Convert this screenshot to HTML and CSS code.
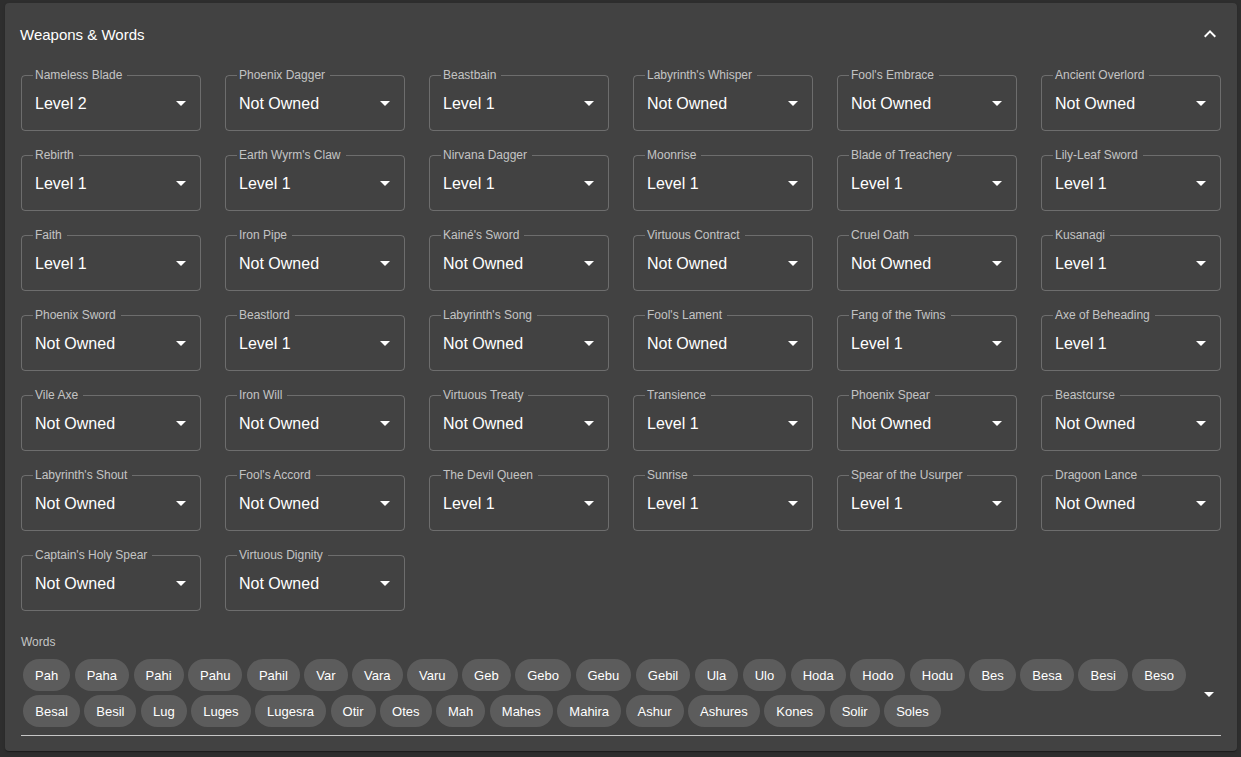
FILE: index.html
```html
<!DOCTYPE html>
<html lang="en">
<head>
<meta charset="utf-8">
<title>Weapons &amp; Words</title>
<link rel="stylesheet" href="styles.css">
</head>
<body>
<section class="card">
  <header class="card-header">
    <h2 class="card-title">Weapons &amp; Words</h2>
    <button class="collapse-btn" aria-label="collapse">
      <svg viewBox="0 0 24 24" width="24" height="24"><path d="M12 8l-6 6 1.41 1.41L12 10.83l4.59 4.58L18 14z" fill="#fff"/></svg>
    </button>
  </header>
  <div class="card-body">
    <div class="weapon-grid">
      <div class="select"><span class="select-label">Nameless Blade</span><span class="select-value">Level 2</span><svg class="arrow" viewBox="0 0 24 24"><path d="M7 10l5 5 5-5z"/></svg></div>
      <div class="select"><span class="select-label">Phoenix Dagger</span><span class="select-value">Not Owned</span><svg class="arrow" viewBox="0 0 24 24"><path d="M7 10l5 5 5-5z"/></svg></div>
      <div class="select"><span class="select-label">Beastbain</span><span class="select-value">Level 1</span><svg class="arrow" viewBox="0 0 24 24"><path d="M7 10l5 5 5-5z"/></svg></div>
      <div class="select"><span class="select-label">Labyrinth's Whisper</span><span class="select-value">Not Owned</span><svg class="arrow" viewBox="0 0 24 24"><path d="M7 10l5 5 5-5z"/></svg></div>
      <div class="select"><span class="select-label">Fool's Embrace</span><span class="select-value">Not Owned</span><svg class="arrow" viewBox="0 0 24 24"><path d="M7 10l5 5 5-5z"/></svg></div>
      <div class="select"><span class="select-label">Ancient Overlord</span><span class="select-value">Not Owned</span><svg class="arrow" viewBox="0 0 24 24"><path d="M7 10l5 5 5-5z"/></svg></div>

      <div class="select"><span class="select-label">Rebirth</span><span class="select-value">Level 1</span><svg class="arrow" viewBox="0 0 24 24"><path d="M7 10l5 5 5-5z"/></svg></div>
      <div class="select"><span class="select-label">Earth Wyrm's Claw</span><span class="select-value">Level 1</span><svg class="arrow" viewBox="0 0 24 24"><path d="M7 10l5 5 5-5z"/></svg></div>
      <div class="select"><span class="select-label">Nirvana Dagger</span><span class="select-value">Level 1</span><svg class="arrow" viewBox="0 0 24 24"><path d="M7 10l5 5 5-5z"/></svg></div>
      <div class="select"><span class="select-label">Moonrise</span><span class="select-value">Level 1</span><svg class="arrow" viewBox="0 0 24 24"><path d="M7 10l5 5 5-5z"/></svg></div>
      <div class="select"><span class="select-label">Blade of Treachery</span><span class="select-value">Level 1</span><svg class="arrow" viewBox="0 0 24 24"><path d="M7 10l5 5 5-5z"/></svg></div>
      <div class="select"><span class="select-label">Lily-Leaf Sword</span><span class="select-value">Level 1</span><svg class="arrow" viewBox="0 0 24 24"><path d="M7 10l5 5 5-5z"/></svg></div>

      <div class="select"><span class="select-label">Faith</span><span class="select-value">Level 1</span><svg class="arrow" viewBox="0 0 24 24"><path d="M7 10l5 5 5-5z"/></svg></div>
      <div class="select"><span class="select-label">Iron Pipe</span><span class="select-value">Not Owned</span><svg class="arrow" viewBox="0 0 24 24"><path d="M7 10l5 5 5-5z"/></svg></div>
      <div class="select"><span class="select-label">Kainé's Sword</span><span class="select-value">Not Owned</span><svg class="arrow" viewBox="0 0 24 24"><path d="M7 10l5 5 5-5z"/></svg></div>
      <div class="select"><span class="select-label">Virtuous Contract</span><span class="select-value">Not Owned</span><svg class="arrow" viewBox="0 0 24 24"><path d="M7 10l5 5 5-5z"/></svg></div>
      <div class="select"><span class="select-label">Cruel Oath</span><span class="select-value">Not Owned</span><svg class="arrow" viewBox="0 0 24 24"><path d="M7 10l5 5 5-5z"/></svg></div>
      <div class="select"><span class="select-label">Kusanagi</span><span class="select-value">Level 1</span><svg class="arrow" viewBox="0 0 24 24"><path d="M7 10l5 5 5-5z"/></svg></div>

      <div class="select"><span class="select-label">Phoenix Sword</span><span class="select-value">Not Owned</span><svg class="arrow" viewBox="0 0 24 24"><path d="M7 10l5 5 5-5z"/></svg></div>
      <div class="select"><span class="select-label">Beastlord</span><span class="select-value">Level 1</span><svg class="arrow" viewBox="0 0 24 24"><path d="M7 10l5 5 5-5z"/></svg></div>
      <div class="select"><span class="select-label">Labyrinth's Song</span><span class="select-value">Not Owned</span><svg class="arrow" viewBox="0 0 24 24"><path d="M7 10l5 5 5-5z"/></svg></div>
      <div class="select"><span class="select-label">Fool's Lament</span><span class="select-value">Not Owned</span><svg class="arrow" viewBox="0 0 24 24"><path d="M7 10l5 5 5-5z"/></svg></div>
      <div class="select"><span class="select-label">Fang of the Twins</span><span class="select-value">Level 1</span><svg class="arrow" viewBox="0 0 24 24"><path d="M7 10l5 5 5-5z"/></svg></div>
      <div class="select"><span class="select-label">Axe of Beheading</span><span class="select-value">Level 1</span><svg class="arrow" viewBox="0 0 24 24"><path d="M7 10l5 5 5-5z"/></svg></div>

      <div class="select"><span class="select-label">Vile Axe</span><span class="select-value">Not Owned</span><svg class="arrow" viewBox="0 0 24 24"><path d="M7 10l5 5 5-5z"/></svg></div>
      <div class="select"><span class="select-label">Iron Will</span><span class="select-value">Not Owned</span><svg class="arrow" viewBox="0 0 24 24"><path d="M7 10l5 5 5-5z"/></svg></div>
      <div class="select"><span class="select-label">Virtuous Treaty</span><span class="select-value">Not Owned</span><svg class="arrow" viewBox="0 0 24 24"><path d="M7 10l5 5 5-5z"/></svg></div>
      <div class="select"><span class="select-label">Transience</span><span class="select-value">Level 1</span><svg class="arrow" viewBox="0 0 24 24"><path d="M7 10l5 5 5-5z"/></svg></div>
      <div class="select"><span class="select-label">Phoenix Spear</span><span class="select-value">Not Owned</span><svg class="arrow" viewBox="0 0 24 24"><path d="M7 10l5 5 5-5z"/></svg></div>
      <div class="select"><span class="select-label">Beastcurse</span><span class="select-value">Not Owned</span><svg class="arrow" viewBox="0 0 24 24"><path d="M7 10l5 5 5-5z"/></svg></div>

      <div class="select"><span class="select-label">Labyrinth's Shout</span><span class="select-value">Not Owned</span><svg class="arrow" viewBox="0 0 24 24"><path d="M7 10l5 5 5-5z"/></svg></div>
      <div class="select"><span class="select-label">Fool's Accord</span><span class="select-value">Not Owned</span><svg class="arrow" viewBox="0 0 24 24"><path d="M7 10l5 5 5-5z"/></svg></div>
      <div class="select"><span class="select-label">The Devil Queen</span><span class="select-value">Level 1</span><svg class="arrow" viewBox="0 0 24 24"><path d="M7 10l5 5 5-5z"/></svg></div>
      <div class="select"><span class="select-label">Sunrise</span><span class="select-value">Level 1</span><svg class="arrow" viewBox="0 0 24 24"><path d="M7 10l5 5 5-5z"/></svg></div>
      <div class="select"><span class="select-label">Spear of the Usurper</span><span class="select-value">Level 1</span><svg class="arrow" viewBox="0 0 24 24"><path d="M7 10l5 5 5-5z"/></svg></div>
      <div class="select"><span class="select-label">Dragoon Lance</span><span class="select-value">Not Owned</span><svg class="arrow" viewBox="0 0 24 24"><path d="M7 10l5 5 5-5z"/></svg></div>

      <div class="select"><span class="select-label">Captain's Holy Spear</span><span class="select-value">Not Owned</span><svg class="arrow" viewBox="0 0 24 24"><path d="M7 10l5 5 5-5z"/></svg></div>
      <div class="select"><span class="select-label">Virtuous Dignity</span><span class="select-value">Not Owned</span><svg class="arrow" viewBox="0 0 24 24"><path d="M7 10l5 5 5-5z"/></svg></div>
    </div>

    <div class="words">
      <div class="words-label">Words</div>
      <div class="words-input">
        <span class="chip">Pah</span><span class="chip">Paha</span><span class="chip">Pahi</span><span class="chip">Pahu</span><span class="chip">Pahil</span><span class="chip">Var</span><span class="chip">Vara</span><span class="chip">Varu</span><span class="chip">Geb</span><span class="chip">Gebo</span><span class="chip">Gebu</span><span class="chip">Gebil</span><span class="chip">Ula</span><span class="chip">Ulo</span><span class="chip">Hoda</span><span class="chip">Hodo</span><span class="chip">Hodu</span><span class="chip">Bes</span><span class="chip">Besa</span><span class="chip">Besi</span><span class="chip">Beso</span><span class="chip">Besal</span><span class="chip">Besil</span><span class="chip">Lug</span><span class="chip">Luges</span><span class="chip">Lugesra</span><span class="chip">Otir</span><span class="chip">Otes</span><span class="chip">Mah</span><span class="chip">Mahes</span><span class="chip">Mahira</span><span class="chip">Ashur</span><span class="chip">Ashures</span><span class="chip">Kones</span><span class="chip">Solir</span><span class="chip">Soles</span>
        <svg class="popup-arrow" viewBox="0 0 24 24"><path d="M7 10l5 5 5-5z"/></svg>
      </div>
    </div>
  </div>
</section>
</body>
</html>
```

FILE: styles.css
```css
* { box-sizing: border-box; }

html, body {
  margin: 0;
  background: #2e2e2e;
}

body {
  padding: 3px 4px 6px 5px;
  font-family: "Liberation Sans", Arial, sans-serif;
  color: #fff;
}

.card {
  background: #424242;
  border-radius: 4px;
  box-shadow: 0 2px 1px -1px rgba(0,0,0,0.2), 0 1px 1px 0 rgba(0,0,0,0.14), 0 1px 3px 0 rgba(0,0,0,0.12);
  padding: 0 16px 15px;
}

.card-header {
  height: 62px;
  display: flex;
  align-items: center;
  justify-content: space-between;
}

.card-title {
  margin: 0 0 0 -1px;
  font-size: 15px;
  font-weight: 400;
}

.collapse-btn {
  background: none;
  border: 0;
  padding: 0;
  margin-right: -0.5px;
  width: 24px;
  height: 24px;
  display: flex;
}

.card-body {
  padding-top: 10px;
}

.weapon-grid {
  display: grid;
  grid-template-columns: repeat(6, 180px);
  column-gap: 24px;
  row-gap: 24px;
}

.select {
  position: relative;
  height: 56px;
  border: 1px solid rgba(255,255,255,0.23);
  border-radius: 4px;
  display: flex;
  align-items: center;
  padding: 0 7px 0 13px;
}

.select-label {
  position: absolute;
  top: -7px;
  left: 11px;
  padding: 0 5px 0 2px;
  background: #424242;
  font-size: 12px;
  line-height: 12px;
  color: rgba(255,255,255,0.7);
  white-space: nowrap;
}

.select-value {
  flex: 1;
  font-size: 16px;
  line-height: 23px;
  padding-top: 1px;
}

.arrow {
  width: 24px;
  height: 24px;
  fill: #fff;
  flex: none;
}

.words {
  margin-top: 25px;
}

.words-label {
  font-size: 12px;
  line-height: 12px;
  color: rgba(255,255,255,0.7);
}

.words-input {
  position: relative;
  margin-top: 9px;
  display: flex;
  flex-wrap: wrap;
  padding: 0 30px 6px 0;
  border-bottom: 1px solid rgba(255,255,255,0.7);
}

.chip {
  height: 32px;
  margin: 2px 2.25px 2px 2px;
  padding: 0 12px;
  border-radius: 16px;
  background: #5c5c5c;
  font-size: 13px;
  display: inline-flex;
  align-items: center;
  color: #fff;
}

.chip + .chip {
  margin-left: 2.25px;
}

.popup-arrow {
  position: absolute;
  right: 0;
  top: 25px;
  width: 24px;
  height: 24px;
  fill: #fff;
}
```
